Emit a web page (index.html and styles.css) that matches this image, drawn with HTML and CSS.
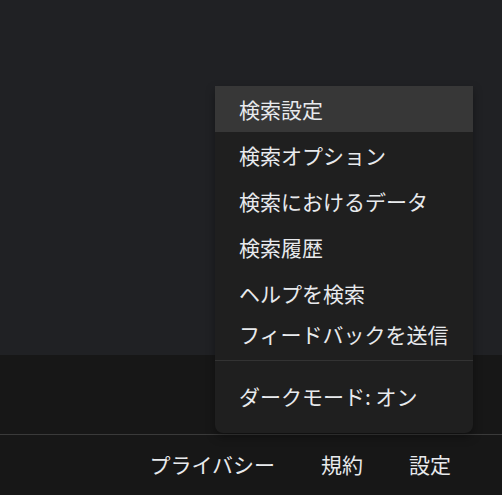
FILE: index.html
```html
<!DOCTYPE html>
<html lang="ja">
<head>
<meta charset="utf-8">
<link rel="stylesheet" href="styles.css">
</head>
<body>
<div class="page">
  <main class="main"></main>
  <footer class="footer">
    <div class="footer-top"></div>
    <nav class="footer-links">
      <a class="flink">プライバシー</a>
      <a class="flink">規約</a>
      <a class="flink">設定</a>
    </nav>
  </footer>
  <div class="menu">
    <div class="item item-active">検索設定</div>
    <div class="item">検索オプション</div>
    <div class="item">検索におけるデータ</div>
    <div class="item">検索履歴</div>
    <div class="item">ヘルプを検索</div>
    <div class="item item-short">フィードバックを送信</div>
    <div class="divider"></div>
    <div class="item item-dark">ダークモード: オン</div>
  </div>
</div>
</body>
</html>
```
FILE: styles.css
```css
html, body {
  margin: 0;
  padding: 0;
  background: #202124;
  font-family: "Noto Sans CJK JP", "Noto Sans", sans-serif;
  color: #e8eaed;
}
.page {
  position: relative;
  width: 502px;
  height: 495px;
  display: flex;
  flex-direction: column;
  overflow: hidden;
}
.main {
  height: 355px;
  background: #202124;
}
.footer {
  flex: 1;
  background: #171717;
  display: flex;
  flex-direction: column;
}
.footer-top {
  height: 79px;
  border-bottom: 1px solid #3a3a3a;
}
.footer-links {
  flex: 1;
  display: flex;
  justify-content: flex-end;
  align-items: center;
  gap: 46px;
  padding-right: 51px;
  padding-bottom: 2px;
}
.flink {
  font-size: 21px;
  color: #e8eaed;
  line-height: 1;
}
.menu {
  position: absolute;
  left: 215px;
  top: 86px;
  width: 258px;
  height: 347px;
  background: #1f1f1f;
  border-radius: 0 0 8px 8px;
  box-shadow: 0 4px 10px rgba(0, 0, 0, 0.35);
  display: flex;
  flex-direction: column;
}
.item {
  height: 46px;
  display: flex;
  align-items: center;
  padding-left: 24px;
  font-size: 21px;
  line-height: 1;
  color: #e8eaed;
  white-space: nowrap;
}
.item-active {
  height: 46px;
  background: #373737;
}
.item-short {
  height: 36px;
}
.divider {
  height: 1px;
  background: #333333;
  margin: 8px 0 0;
}
.item-dark {
  height: 70px;
}
```
